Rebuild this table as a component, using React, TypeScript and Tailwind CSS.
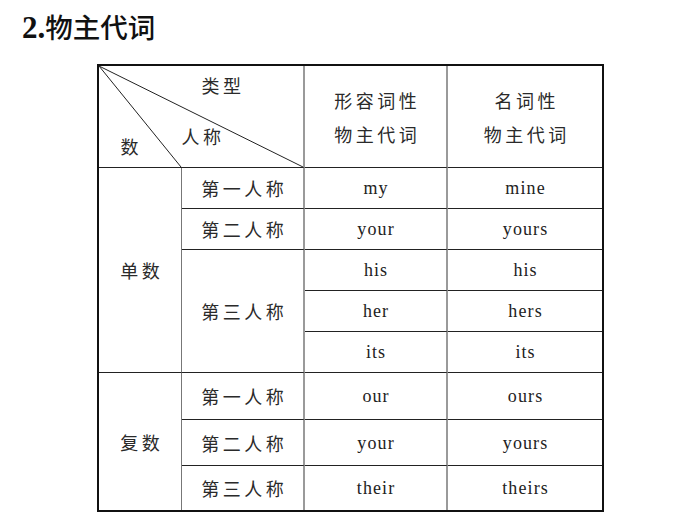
import type { ReactElement, ReactNode } from 'react'

const CJK = "font-['Noto_Sans_CJK_SC','Noto_Sans',sans-serif]"
const LATIN = "font-['Liberation_Serif','Noto_Sans_CJK_SC',serif]"

type Row = { person: string; adj: string; noun: string }

const SINGULAR: Row[] = [
  { person: '第一人称', adj: 'my', noun: 'mine' },
  { person: '第二人称', adj: 'your', noun: 'yours' },
]

const THIRD: { adj: string; noun: string }[] = [
  { adj: 'his', noun: 'his' },
  { adj: 'her', noun: 'hers' },
  { adj: 'its', noun: 'its' },
]

const PLURAL: Row[] = [
  { person: '第一人称', adj: 'our', noun: 'ours' },
  { person: '第二人称', adj: 'your', noun: 'yours' },
  { person: '第三人称', adj: 'their', noun: 'theirs' },
]

function Zh({ children }: { children: ReactNode }): ReactElement {
  return (
    <span className={`${CJK} text-[18px] leading-[18px] tracking-[3.5px] text-[#2a2a2a] pl-[3.5px]`}>
      {children}
    </span>
  )
}

function En({ children }: { children: ReactNode }): ReactElement {
  return (
    <span className={`${LATIN} text-[18px] leading-[18px] tracking-[1.1px] text-[#222] pl-[1.1px]`}>
      {children}
    </span>
  )
}

export default function App(): ReactElement {
  return (
    <div className="w-[675px] h-[526px] bg-white overflow-hidden">
      <h2 className="flex items-baseline pl-[22px] pt-[9px] h-[55px] text-[#111]">
        <span className={`${LATIN} font-bold text-[31px] leading-[34px]`}>2.</span>
        <span className={`${CJK} font-medium text-[27.5px] leading-[34px]`}>物主代词</span>
      </h2>

      <div className="ml-[97px] mt-[9px] w-fit border-2 border-[#111]">
        <div className="grid grid-cols-[83px_123px_143px_154px] grid-rows-[102px_41px_41px_41px_41px_41px_47px_46px_44px]">
          {/* diagonal header */}
          <div className="relative col-span-2 border-r-2 border-b border-r-[#9a9a9a] border-b-[#222]">
            <svg
              className="absolute inset-0 w-full h-full"
              viewBox="0 0 204 101"
              preserveAspectRatio="none"
              aria-hidden="true"
            >
              <line x1="0" y1="0" x2="82" y2="101" stroke="#222" strokeWidth="1" />
              <line x1="0" y1="0" x2="204" y2="101" stroke="#222" strokeWidth="1" />
            </svg>
            <div className="absolute left-[99px] top-[9px]">
              <Zh>类型</Zh>
            </div>
            <div className="absolute left-[79px] top-[60px]">
              <Zh>人称</Zh>
            </div>
            <div className="absolute left-[18px] top-[70px]">
              <Zh>数</Zh>
            </div>
          </div>
          <div className="flex flex-col items-center justify-center gap-[16px] border-r-2 border-b border-r-[#9a9a9a] border-b-[#222]">
            <Zh>形容词性</Zh>
            <Zh>物主代词</Zh>
          </div>
          <div className="flex flex-col items-center justify-center gap-[16px] border-b border-b-[#222]">
            <Zh>名词性</Zh>
            <Zh>物主代词</Zh>
          </div>

          {/* singular */}
          <div className="row-span-5 flex items-center justify-center border-r border-b border-r-[#777] border-b-[#222]">
            <Zh>单数</Zh>
          </div>
          {SINGULAR.map((r) => (
            <Cells key={r.adj} person={r.person} adj={r.adj} noun={r.noun} last={false} />
          ))}
          <div className="row-span-3 flex items-center justify-center border-r-2 border-b border-r-[#9a9a9a] border-b-[#222]">
            <Zh>第三人称</Zh>
          </div>
          {THIRD.map((r) => (
            <Pair key={r.adj} adj={r.adj} noun={r.noun} last={false} />
          ))}

          {/* plural */}
          <div className="row-span-3 flex items-center justify-center border-r border-r-[#777]">
            <Zh>复数</Zh>
          </div>
          {PLURAL.map((r, i) => (
            <Cells
              key={r.person}
              person={r.person}
              adj={r.adj}
              noun={r.noun}
              last={i === PLURAL.length - 1}
            />
          ))}
        </div>
      </div>
    </div>
  )
}

function Cells({ person, adj, noun, last }: Row & { last: boolean }): ReactElement {
  return (
    <>
      <div
        className={
          last
            ? 'flex items-center justify-center border-r-2 border-r-[#9a9a9a]'
            : 'flex items-center justify-center border-r-2 border-b border-r-[#9a9a9a] border-b-[#222]'
        }
      >
        <Zh>{person}</Zh>
      </div>
      <Pair adj={adj} noun={noun} last={last} />
    </>
  )
}

function Pair({ adj, noun, last }: { adj: string; noun: string; last: boolean }): ReactElement {
  return (
    <>
      <div
        className={
          last
            ? 'flex items-center justify-center border-r-2 border-r-[#9a9a9a]'
            : 'flex items-center justify-center border-r-2 border-b border-r-[#9a9a9a] border-b-[#222]'
        }
      >
        <En>{adj}</En>
      </div>
      <div
        className={
          last
            ? 'flex items-center justify-center'
            : 'flex items-center justify-center border-b border-b-[#222]'
        }
      >
        <En>{noun}</En>
      </div>
    </>
  )
}
